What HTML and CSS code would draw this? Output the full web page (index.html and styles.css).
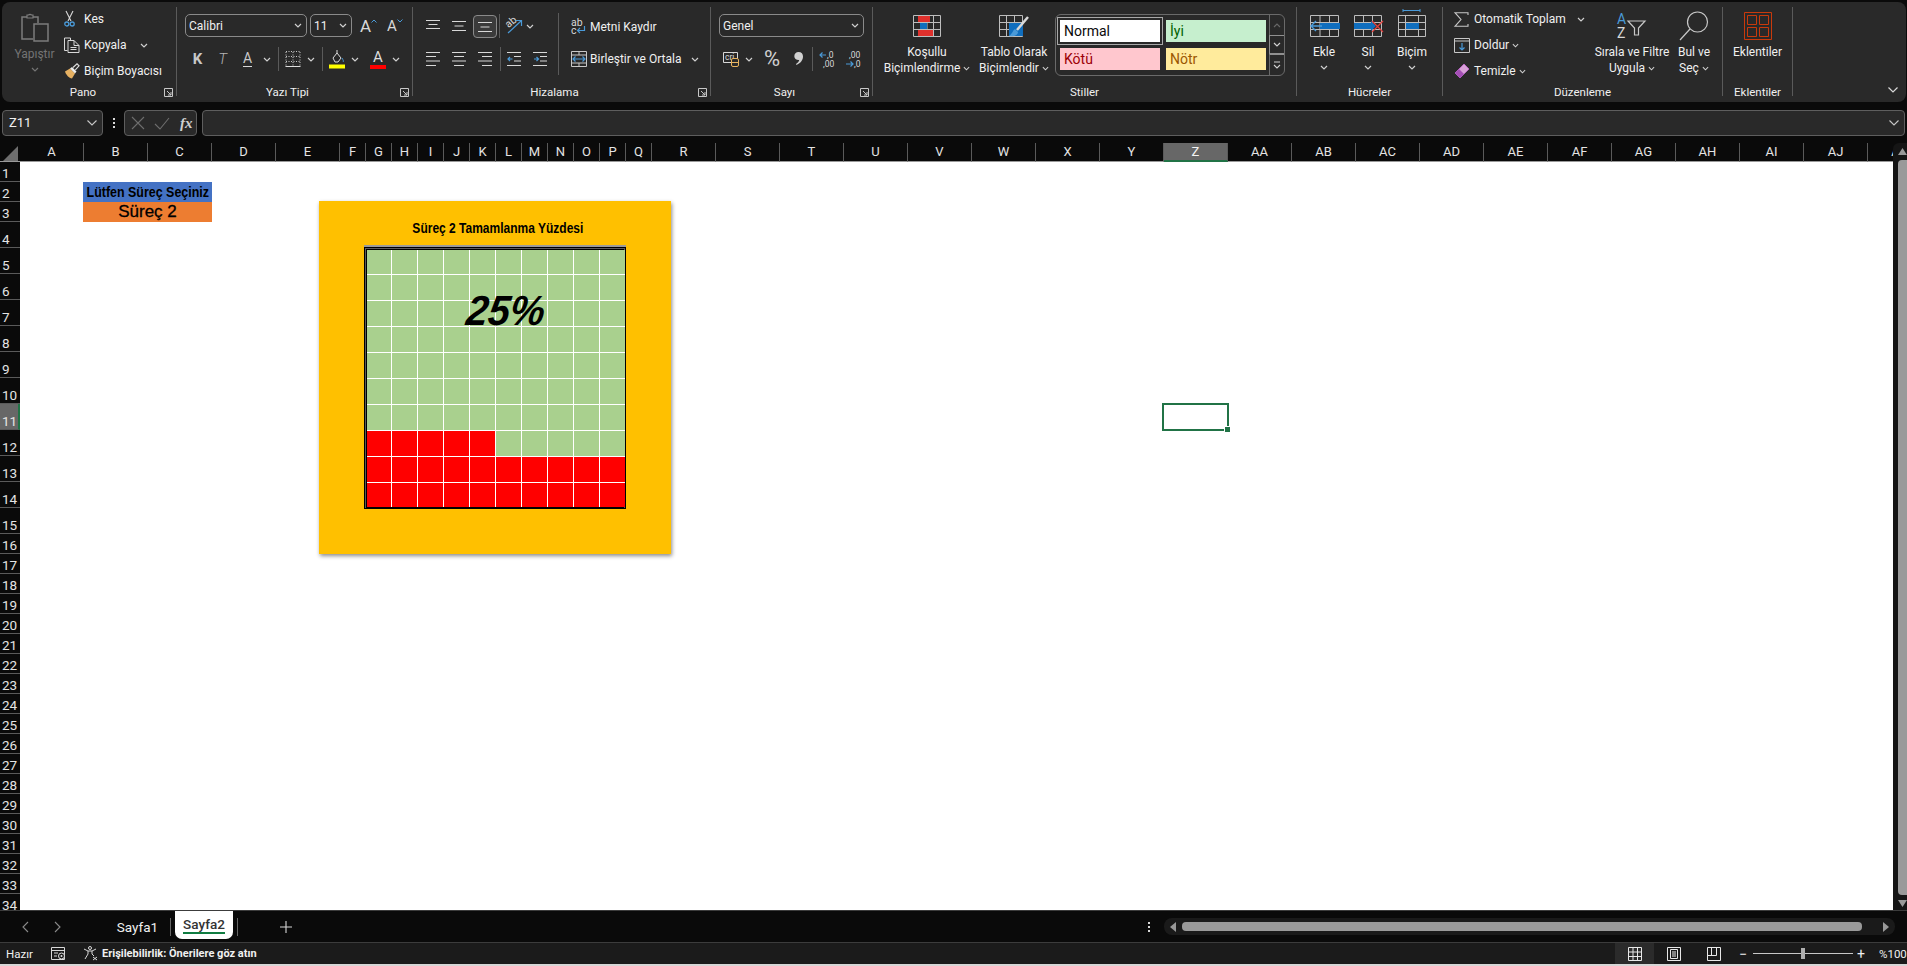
FILE: index.html
```html
<!DOCTYPE html>
<html lang="tr">
<head>
<meta charset="utf-8">
<title>Sayfa2 - Excel</title>
<link rel="stylesheet" href="styles.css">
</head>
<body>
<svg class="sprite" width="0" height="0">
  <symbol id="chev" viewBox="0 0 8 5"><path d="M1 1l3 3 3-3" fill="none" stroke="#d0d0d0" stroke-width="1.2"/></symbol>
  <symbol id="launch" viewBox="0 0 9 9"><path d="M.5 8.5V.5h8v8zM3 3l4 4M7 4v3H4" fill="none" stroke="#c8c8c8"/></symbol>
  <symbol id="grid" viewBox="0 0 28 22"><path d="M.5.5h27v21H.5zM.5 7.5h27M.5 14.5h27M7.5.5v21M14 .5v21M20.5.5v21" fill="none" stroke="#bdbdbd"/></symbol>
</svg>
<div class="app">
  <header class="ribbon">
    <section class="group launcher-group g-clip">
      <div class="body clip-body">
        <div class="paste">
          <svg class="ic-paste" width="28" height="31" viewBox="0 0 28 31"><path d="M12 27H1V5h5M12 5h5v6" fill="none" stroke="#7c7c7c" stroke-width="1.5"/><path d="M6 6V3h1.5a2 2 0 0 1 3 0H12v3z" fill="none" stroke="#7c7c7c" stroke-width="1.2"/><path d="M13 12h14v17H13z" fill="none" stroke="#7c7c7c" stroke-width="1.5"/></svg>
          <span class="dim">Yapıştır</span>
          <svg class="chev dimmed" width="8" height="5"><use href="#chev"/></svg>
        </div>
        <div class="stack">
          <div class="srow"><span class="sic"><svg width="11" height="16" viewBox="0 0 11 16"><path d="M2 0l5 10M9 0L4 10" fill="none" stroke="#d8d8d8" stroke-width="1.1"/><circle cx="2.8" cy="13" r="2" fill="none" stroke="#4a9ad8" stroke-width="1.3"/><circle cx="8.2" cy="13" r="2" fill="none" stroke="#4a9ad8" stroke-width="1.3"/></svg></span>Kes</div>
          <div class="srow"><span class="sic"><svg width="16" height="16" viewBox="0 0 16 16"><path d="M3.5 13.5H.5V1h6v2" fill="none" stroke="#d8d8d8"/><path d="M4 3.500h6l5 5v7H4zM10 3.500v5h5M6.500 10.500h6M6.500 12.500h6" fill="none" stroke="#d8d8d8"/></svg></span>Kopyala<svg class="chev after-copy" width="8" height="5"><use href="#chev"/></svg></div>
          <div class="srow"><span class="sic"><svg width="16" height="16" viewBox="0 0 16 16"><path d="M1 8.500l5-3 5 5-3 5C5 15 2 12 1 8.500z" fill="#e5b061"/><path d="M6 5.500l5 5 1.500-2-4.500-4.500z" fill="#eee"/><path d="M9 4.500L13 .8l2 2-3.700 4" fill="none" stroke="#ddd" stroke-width="1.200"/></svg></span>Biçim Boyacısı</div>
        </div>
      </div>
      <div class="label">Pano</div>
      <svg class="launch" width="9" height="9"><use href="#launch"/></svg>
    </section>

    <section class="group launcher-group g-font">
      <div class="body pad-col">
        <div class="row1 font-row1">
          <div class="combo w122">Calibri<svg class="chev" width="8" height="5"><use href="#chev"/></svg></div>
          <div class="combo w42">11<svg class="chev" width="8" height="5"><use href="#chev"/></svg></div>
          <div class="grow">A<svg class="caret" width="6" height="4" viewBox="0 0 6 4"><path d="M.5 3.500L3 1l2.500 2.500" fill="none" stroke="#4a9ad8"/></svg></div>
          <div class="shrink">A<svg class="caret" width="6" height="4" viewBox="0 0 6 4"><path d="M.5.500L3 3 5.500.5" fill="none" stroke="#4a9ad8"/></svg></div>
        </div>
        <div class="row2 font-row2">
          <b class="glyph">K</b>
          <i class="glyph thin">T</i>
          <span class="glyph under">A</span>
          <svg class="chev" width="8" height="5"><use href="#chev"/></svg>
          <span class="vsep"></span>
          <svg width="16" height="16" viewBox="0 0 16 16"><path d="M1 .5h14M1 5.500h14M1 10.500h14M1 1v14M8 1v14M15 1v14" fill="none" stroke="#c8c8c8" stroke-dasharray="1 1.500"/><path d="M.5 15.500h15" stroke="#e0e0e0"/></svg>
          <svg class="chev" width="8" height="5"><use href="#chev"/></svg>
          <span class="vsep"></span>
          <svg width="16" height="20" viewBox="0 0 16 20"><path d="M4 9l4-5 4 5-3 4H6zM8 4V1" fill="none" stroke="#ddd"/><path d="M13 9c1 2 2 3 1 4" fill="none" stroke="#4a9ad8"/><rect y="15.500" width="16" height="4" fill="#ffff00"/></svg>
          <svg class="chev" width="8" height="5"><use href="#chev"/></svg>
          <span></span>
          <span class="fontcolor">A</span>
          <svg class="chev" width="8" height="5"><use href="#chev"/></svg>
        </div>
      </div>
      <div class="label">Yazı Tipi</div>
      <svg class="launch" width="9" height="9"><use href="#launch"/></svg>
    </section>

    <section class="group launcher-group g-align">
      <div class="body align-body">
        <div class="align-block">
          <div class="row1 align-row1">
            <svg width="14" height="14" viewBox="0 0 14 14"><path d="M0 1.500h14M2.500 5.500h9M0 9.500h14" stroke="#d8d8d8"/></svg>
            <svg width="14" height="14" viewBox="0 0 14 14"><path d="M0 2.500h14M2.500 7h9M0 11.500h14" stroke="#d8d8d8"/></svg>
            <span class="selected"><svg width="14" height="14" viewBox="0 0 14 14"><path d="M0 3.500h14M2.500 8h9M0 12.500h14" stroke="#d8d8d8"/></svg></span>
            <span class="vsep"></span>
            <svg width="17" height="18" viewBox="0 0 17 18"><text x="1" y="9" class="svgt" transform="rotate(-40 5 8)">ab</text><path d="M2 16L15 4M10 3.500h5.500V9" fill="none" stroke="#4a9ad8" stroke-width="1.200"/></svg>
            <svg class="chev" width="8" height="5"><use href="#chev"/></svg>
          </div>
          <div class="row2 align-row2">
            <svg width="14" height="14" viewBox="0 0 14 14"><path d="M0 .5h14M0 4.500h10M0 9h14M0 13.500h10" stroke="#d8d8d8"/></svg>
            <svg width="14" height="14" viewBox="0 0 14 14"><path d="M0 .5h14M2 4.500h10M0 9h14M2 13.500h10" stroke="#d8d8d8"/></svg>
            <svg width="14" height="14" viewBox="0 0 14 14"><path d="M0 .5h14M4 4.500h10M0 9h14M4 13.500h10" stroke="#d8d8d8"/></svg>
            <span class="vsep"></span>
            <svg width="14" height="14" viewBox="0 0 14 14"><path d="M0 .5h14M7 4.500h7M7 9h7M0 13.500h14" stroke="#d8d8d8"/><path d="M5.500 7H1M3 5L1 7l2 2" fill="none" stroke="#4a9ad8" stroke-width="1.200"/></svg>
            <svg width="14" height="14" viewBox="0 0 14 14"><path d="M0 .5h14M7 4.500h7M7 9h7M0 13.500h14" stroke="#d8d8d8"/><path d="M1 7h4.500M3.500 5l2 2-2 2" fill="none" stroke="#4a9ad8" stroke-width="1.200"/></svg>
          </div>
        </div>
        <span class="vsep tall"></span>
        <div class="wrap-block">
          <div class="wrow"><span class="sic2"><svg width="15" height="16" viewBox="0 0 15 16"><text class="svgt"><tspan x="0" y="7">ab</tspan><tspan x="0" y="15">c</tspan></text><path d="M13.500 7v4.500H6.500M9 9l-2.500 2.500L9 14" fill="none" stroke="#4a9ad8" stroke-width="1.200"/></svg></span>Metni Kaydır</div>
          <div class="wrow"><span class="sic2"><svg width="16" height="16" viewBox="0 0 16 16"><path d="M.5.500h15v15H.5zM.5 4h15M.5 12h15M8 .5V4M8 12v3.500" fill="none" stroke="#c8c8c8"/><path d="M2 8h12M4.500 5.500L2 8l2.500 2.500M11.500 5.500L14 8l-2.500 2.500" fill="none" stroke="#4a9ad8" stroke-width="1.200"/></svg></span>Birleştir ve Ortala<svg class="chev push" width="8" height="5"><use href="#chev"/></svg></div>
        </div>
      </div>
      <div class="label">Hizalama</div>
      <svg class="launch" width="9" height="9"><use href="#launch"/></svg>
    </section>

    <section class="group launcher-group g-number">
      <div class="body pad-col">
        <div class="row1"><div class="combo w145">Genel<svg class="chev" width="8" height="5"><use href="#chev"/></svg></div></div>
        <div class="row2 num-row2">
          <svg width="16" height="16" viewBox="0 0 16 16"><path d="M.5 1.500h14v10H.5z" fill="none" stroke="#d8d8d8"/><text x="2" y="9" class="svgs">cri</text><rect x="8.500" y="7.500" width="7" height="8" rx="1.500" fill="#2a2a2a" stroke="#e8b45f"/><path d="M8.500 11.500h7" stroke="#e8b45f"/></svg>
          <svg class="chev" width="8" height="5"><use href="#chev"/></svg>
          <span class="pct-sign">%</span>
          <svg class="comma-ic" width="9" height="13" viewBox="0 0 9 13"><path d="M4.500 0C7.500 0 9 2 9 4.500 9 8.500 6 11.500 2.500 13L2 12c2-1.300 3-2.800 3.200-4C2.500 8.300 .3 6.500.3 4.200.3 1.800 2 0 4.500 0z" fill="#d0d0d0"/></svg>
          <span class="vsep"></span>
          <svg width="16" height="17" viewBox="0 0 16 17"><text class="svgs"><tspan x="8" y="7">,0</tspan><tspan x="4" y="16">,00</tspan></text><path d="M7 4H1M3.500 1.500L1 4l2.500 2.500" fill="none" stroke="#4a9ad8" stroke-width="1.200"/></svg>
          <svg width="16" height="17" viewBox="0 0 16 17"><text class="svgs"><tspan x="4" y="7">,00</tspan><tspan x="9" y="16">,0</tspan></text><path d="M1 13h7M5.500 10.500L8 13l-2.500 2.500" fill="none" stroke="#4a9ad8" stroke-width="1.200"/></svg>
        </div>
      </div>
      <div class="label">Sayı</div>
      <svg class="launch" width="9" height="9"><use href="#launch"/></svg>
    </section>

    <section class="group g-styles">
      <div class="body styles-body">
        <div class="large w88">
          <span class="lic"><svg width="28" height="22" viewBox="0 0 28 22"><use href="#grid" width="28" height="22"/><rect x="5" y="1" width="12" height="6" fill="#e0302c"/><rect x="7" y="8" width="7" height="6" fill="#106ebe"/><rect x="5" y="15" width="15" height="6" fill="#e0302c"/></svg></span>
          <span>Koşullu</span>
          <span>Biçimlendirme<svg class="chev" width="7" height="5"><use href="#chev"/></svg></span>
        </div>
        <div class="large w72">
          <span class="lic"><svg width="30" height="22" viewBox="0 0 30 22"><path d="M.5.500h23v21H.5zM.5 7.500h23M.5 14.500h23M7.500.500v21M15.500 .5v21" fill="none" stroke="#bdbdbd"/><rect x="10" y="8" width="14" height="13" fill="#106ebe"/><path d="M29 2L18 15" stroke="#d8d8d8" stroke-width="2.500"/><path d="M16 14c-2 1-2 4-6 7 5 1 9-1 9-4z" fill="#4a9ad8"/></svg></span>
          <span>Tablo Olarak</span>
          <span>Biçimlendir<svg class="chev" width="7" height="5"><use href="#chev"/></svg></span>
        </div>
        <div class="gallery">
          <div class="styles-grid">
            <div class="sty s-normal">Normal</div>
            <div class="sty s-good">İyi</div>
            <div class="sty s-bad">Kötü</div>
            <div class="sty s-neutral">Nötr</div>
          </div>
          <div class="gal-scroll">
            <span class="gs gs1"><svg width="8" height="5" viewBox="0 0 8 5"><path d="M1 4l3-3 3 3" fill="none" stroke="#666" stroke-width="1.200"/></svg></span>
            <span class="gs gs2"><svg class="chev" width="8" height="5"><use href="#chev"/></svg></span>
            <span class="gs gs3"><svg width="8" height="8" viewBox="0 0 8 8"><path d="M1 1h6M1 4l3 3 3-3" fill="none" stroke="#d0d0d0" stroke-width="1.100"/></svg></span>
          </div>
        </div>
      </div>
      <div class="label">Stiller</div>
    </section>

    <section class="group g-cells">
      <div class="body cells-body">
        <div class="large w44">
          <span class="lic"><svg width="31" height="22" viewBox="0 0 31 22"><path d="M1.500.500h28v21h-28zM1.500 7.500h28M1.500 14.500h28M11 .5v21M20.500 .5v21" fill="none" stroke="#bdbdbd"/><rect x="11" y="8" width="20" height="6" fill="#106ebe"/><path d="M13 11H2M7 6l-5 5 5 5" fill="none" stroke="#4a9ad8" stroke-width="1.400"/></svg></span>
          <span>Ekle</span>
          <svg class="chev big" width="8" height="5"><use href="#chev"/></svg>
        </div>
        <div class="large w44">
          <span class="lic"><svg width="31" height="22" viewBox="0 0 31 22"><path d="M1.500.500h27v21h-27zM1.500 7.500h27M1.500 14.500h27M10.500.5v21M19.500 .5v21" fill="none" stroke="#bdbdbd"/><rect x="1" y="8" width="17" height="6" fill="#106ebe"/><path d="M18 6l5 5-5 5z" fill="#106ebe"/><path d="M19 6l11 11M30 6L19 17" stroke="#e0413e" stroke-width="1.300"/></svg></span>
          <span>Sil</span>
          <svg class="chev big" width="8" height="5"><use href="#chev"/></svg>
        </div>
        <div class="large w44 tall-ic">
          <span class="lic"><svg width="28" height="28" viewBox="0 0 28 28"><path d="M5 1.500h17M5 0v3M22 0v3" stroke="#4a9ad8"/><path d="M.5 6.500h27v21H.5zM.5 13.500h27M.5 20.500h27M7.500 6.500v21M20.500 6.500v21" fill="none" stroke="#bdbdbd"/><rect x="8" y="14" width="13" height="6" fill="#106ebe"/></svg></span>
          <span>Biçim</span>
          <svg class="chev big" width="8" height="5"><use href="#chev"/></svg>
        </div>
      </div>
      <div class="label">Hücreler</div>
    </section>

    <section class="group g-edit">
      <div class="body edit-body">
        <div class="stack wide">
          <div class="srow"><span class="sic"><svg width="15" height="15" viewBox="0 0 15 15"><path d="M14 3V.7H1l6 6.800L1 14.300h13V12" fill="none" stroke="#c8c8c8" stroke-width="1.100"/></svg></span>Otomatik Toplam<svg class="chev after-sum" width="8" height="5"><use href="#chev"/></svg></div>
          <div class="srow"><span class="sic"><svg width="16" height="15" viewBox="0 0 16 15"><path d="M.5.500h15v14H.5zM.5 3h15" fill="none" stroke="#c8c8c8"/><path d="M8 5v7M5.500 9.500L8 12l2.500-2.500" fill="none" stroke="#4a9ad8" stroke-width="1.200"/></svg></span>Doldur<svg class="chev after" width="7" height="5"><use href="#chev"/></svg></div>
          <div class="srow"><span class="sic"><svg width="16" height="16" viewBox="0 0 16 16"><path d="M1 10l9-9 5 5-9 9z" fill="#d8a0d8" stroke="#b565c0"/><path d="M1 10l4-4 5 5-4 4z" fill="#a44fb5"/></svg></span>Temizle<svg class="chev after" width="7" height="5"><use href="#chev"/></svg></div>
        </div>
        <div class="large w76">
          <span class="lic"><svg width="30" height="27" viewBox="0 0 30 27"><text class="svga"><tspan x="0" y="12" class="blue">A</tspan><tspan x="0" y="26">Z</tspan></text><path d="M11 9h17l-6.500 7v7h-4v-7z" fill="none" stroke="#c8c8c8" stroke-width="1.200"/></svg></span>
          <span>Sırala ve Filtre</span>
          <span>Uygula<svg class="chev" width="7" height="5"><use href="#chev"/></svg></span>
        </div>
        <div class="large w40 ml4">
          <span class="lic"><svg width="30" height="30" viewBox="0 0 30 30"><circle cx="18.500" cy="11" r="10" fill="none" stroke="#c8c8c8" stroke-width="1.200"/><path d="M11 18L1 29" stroke="#c8c8c8" stroke-width="1.200"/></svg></span>
          <span>Bul ve</span>
          <span>Seç<svg class="chev" width="7" height="5"><use href="#chev"/></svg></span>
        </div>
      </div>
      <div class="label">Düzenleme</div>
    </section>

    <section class="group g-addins">
      <div class="body addins-body">
        <div class="large w70">
          <span class="lic"><svg width="28" height="28" viewBox="0 0 28 28"><path d="M.5.500h27v27H.5z" fill="none" stroke="#c93a0c"/><path d="M3.500 3.500h9v9h-9zM15.500 3.500h9v9h-9zM3.500 15.500h9v9h-9zM15.500 15.500h9v9h-9z" fill="none" stroke="#c93a0c"/></svg></span>
          <span>Eklentiler</span>
        </div>
      </div>
      <div class="label">Eklentiler</div>
    </section>

    <svg class="collapse" width="10" height="6" viewBox="0 0 10 6"><path d="M.5.500L5 5 9.500.5" fill="none" stroke="#d8d8d8" stroke-width="1.200"/></svg>
  </header>

  <div class="formula">
    <div class="namebox">Z11<svg width="10" height="6" viewBox="0 0 10 6"><path d="M.5.500L5 5 9.500.5" fill="none" stroke="#c8c8c8" stroke-width="1.100"/></svg></div>
    <div class="fdots"><span></span><span></span><span></span></div>
    <div class="fxbox">
      <svg width="14" height="14" viewBox="0 0 14 14"><path d="M1 1l12 12M13 1L1 13" stroke="#6e6e6e" stroke-width="1.100"/></svg>
      <svg width="16" height="13" viewBox="0 0 16 13"><path d="M1 7l5 5L15 1" fill="none" stroke="#6e6e6e" stroke-width="1.100"/></svg>
      <i class="fx">fx</i>
    </div>
    <div class="finput"><svg width="10" height="6" viewBox="0 0 10 6"><path d="M.5.500L5 5 9.500.5" fill="none" stroke="#c8c8c8" stroke-width="1.100"/></svg></div>
  </div>

  <main class="sheetwrap">
    <div class="sheet">
      <div class="corner"><svg width="15" height="15" viewBox="0 0 15 15"><path d="M15 0v15H0z" fill="#6e6e6e"/></svg></div>
      <div class="ch">A</div><div class="ch">B</div><div class="ch">C</div><div class="ch">D</div><div class="ch">E</div><div class="ch">F</div><div class="ch">G</div><div class="ch">H</div><div class="ch">I</div><div class="ch">J</div><div class="ch">K</div><div class="ch">L</div><div class="ch">M</div><div class="ch">N</div><div class="ch">O</div><div class="ch">P</div><div class="ch">Q</div><div class="ch">R</div><div class="ch">S</div><div class="ch">T</div><div class="ch">U</div><div class="ch">V</div><div class="ch">W</div><div class="ch">X</div><div class="ch">Y</div><div class="ch active-col">Z</div><div class="ch">AA</div><div class="ch">AB</div><div class="ch">AC</div><div class="ch">AD</div><div class="ch">AE</div><div class="ch">AF</div><div class="ch">AG</div><div class="ch">AH</div><div class="ch">AI</div><div class="ch">AJ</div><div class="ch">AK</div>
      <div class="rh">1</div><div class="rh">2</div><div class="rh">3</div><div class="rh">4</div><div class="rh">5</div><div class="rh">6</div><div class="rh">7</div><div class="rh">8</div><div class="rh">9</div><div class="rh">10</div><div class="rh active-row">11</div><div class="rh">12</div><div class="rh">13</div><div class="rh">14</div><div class="rh">15</div><div class="rh">16</div><div class="rh">17</div><div class="rh">18</div><div class="rh">19</div><div class="rh">20</div><div class="rh">21</div><div class="rh">22</div><div class="rh">23</div><div class="rh">24</div><div class="rh">25</div><div class="rh">26</div><div class="rh">27</div><div class="rh">28</div><div class="rh">29</div><div class="rh">30</div><div class="rh">31</div><div class="rh">32</div><div class="rh">33</div><div class="rh">34</div>

      <div class="cell-title"><span class="squeeze">Lütfen Süreç Seçiniz</span></div>
      <div class="cell-choice">Süreç 2</div>
      <div class="selection"><span class="handle"></span></div>

      <div class="panel">
        <div class="panel-title"><span class="squeeze s80">Süreç 2 Tamamlanma Yüzdesi</span></div>
        <div class="chart">
          <div class="waffle">
            <div class="c"></div><div class="c"></div><div class="c"></div><div class="c"></div><div class="c"></div><div class="c"></div><div class="c"></div><div class="c"></div><div class="c"></div><div class="c"></div>
            <div class="c"></div><div class="c"></div><div class="c"></div><div class="c"></div><div class="c"></div><div class="c"></div><div class="c"></div><div class="c"></div><div class="c"></div><div class="c"></div>
            <div class="c"></div><div class="c"></div><div class="c"></div><div class="c"></div><div class="c"></div><div class="c"></div><div class="c"></div><div class="c"></div><div class="c"></div><div class="c"></div>
            <div class="c"></div><div class="c"></div><div class="c"></div><div class="c"></div><div class="c"></div><div class="c"></div><div class="c"></div><div class="c"></div><div class="c"></div><div class="c"></div>
            <div class="c"></div><div class="c"></div><div class="c"></div><div class="c"></div><div class="c"></div><div class="c"></div><div class="c"></div><div class="c"></div><div class="c"></div><div class="c"></div>
            <div class="c"></div><div class="c"></div><div class="c"></div><div class="c"></div><div class="c"></div><div class="c"></div><div class="c"></div><div class="c"></div><div class="c"></div><div class="c"></div>
            <div class="c"></div><div class="c"></div><div class="c"></div><div class="c"></div><div class="c"></div><div class="c"></div><div class="c"></div><div class="c"></div><div class="c"></div><div class="c"></div>
            <div class="c on"></div><div class="c on"></div><div class="c on"></div><div class="c on"></div><div class="c on"></div><div class="c"></div><div class="c"></div><div class="c"></div><div class="c"></div><div class="c"></div>
            <div class="c on"></div><div class="c on"></div><div class="c on"></div><div class="c on"></div><div class="c on"></div><div class="c on"></div><div class="c on"></div><div class="c on"></div><div class="c on"></div><div class="c on"></div>
            <div class="c on"></div><div class="c on"></div><div class="c on"></div><div class="c on"></div><div class="c on"></div><div class="c on"></div><div class="c on"></div><div class="c on"></div><div class="c on"></div><div class="c on"></div>
          </div>
          <div class="pct">25%</div>
        </div>
      </div>
    </div>
    <div class="vscroll">
      <svg width="9" height="7" viewBox="0 0 9 7"><path d="M4.500 0L9 7H0z" fill="#999"/></svg>
      <div class="vthumb"></div>
      <svg width="9" height="7" viewBox="0 0 9 7"><path d="M4.500 7L9 0H0z" fill="#999"/></svg>
    </div>
  </main>

  <div class="tabs">
    <svg class="navbtn" width="7" height="12" viewBox="0 0 7 12"><path d="M6 1L1 6l5 5" fill="none" stroke="#8a8a8a" stroke-width="1.100"/></svg>
    <svg class="navbtn next" width="7" height="12" viewBox="0 0 7 12"><path d="M1 1l5 5-5 5" fill="none" stroke="#8a8a8a" stroke-width="1.100"/></svg>
    <div class="tab">Sayfa1</div>
    <span class="tsep"></span>
    <div class="tab active"><span>Sayfa2</span></div>
    <span class="tsep"></span>
    <svg class="addtab" width="12" height="12" viewBox="0 0 12 12"><path d="M6 0v12M0 6h12" stroke="#d8d8d8" stroke-width="1.100"/></svg>
    <div class="hdots"><span></span><span></span><span></span></div>
    <div class="htrack">
      <svg width="6" height="10" viewBox="0 0 6 10"><path d="M0 5l6-5v10z" fill="#999"/></svg>
      <div class="hthumb"></div>
      <svg width="6" height="10" viewBox="0 0 6 10"><path d="M6 5L0 0v10z" fill="#999"/></svg>
    </div>
  </div>

  <footer class="status">
    <span class="ready">Hazır</span>
    <svg class="macro" width="15" height="15" viewBox="0 0 15 15"><path d="M.5 1.500h13v12H.5zM.5 4.500h13M3 7h4M3 10h3" fill="none" stroke="#d8d8d8"/><circle cx="10.500" cy="10" r="3" fill="#1b1b1b" stroke="#e0e0e0"/><circle cx="10.500" cy="10" r="1" fill="#e0e0e0"/></svg>
    <svg class="access" width="15" height="15" viewBox="0 0 15 15"><circle cx="7" cy="2" r="1.500" fill="none" stroke="#d8d8d8"/><path d="M1 3l4 2h4l4-2M5 5v3L2 13M9 5v3l2 2M10 11l4 3M14 11l-4 3" fill="none" stroke="#d8d8d8"/></svg>
    <b class="a11y">Erişilebilirlik: Önerilere göz atın</b>
    <div class="views">
      <div class="view v1"><svg width="14" height="14" viewBox="0 0 14 14"><path d="M.5.500h13v13H.5zM.5 5h13M.5 9.500h13M5 .5v13M9.500.5v13" fill="none" stroke="#e8e8e8"/></svg></div>
      <div class="view v2"><svg width="14" height="14" viewBox="0 0 14 14"><path d="M.5.500h13v13H.5z" fill="none" stroke="#e8e8e8"/><path d="M3.500 2.500h7v9h-7zM5 5h4M5 7h4M5 9h4" fill="none" stroke="#e8e8e8"/></svg></div>
      <div class="view v3"><svg width="14" height="14" viewBox="0 0 14 14"><path d="M.5.500h13v13H.5zM.5 8.500h9M4.500.5v8M9.500.5v8" fill="none" stroke="#e8e8e8"/></svg></div>
    </div>
    <div class="zoom">
      <span class="zbtn">−</span>
      <div class="zslider"><span class="zknob"></span></div>
      <span class="zbtn">+</span>
      <span class="zval">%100</span>
    </div>
  </footer>
  <div class="edge"></div>
</div>
</body>
</html>
```

FILE: styles.css
```css
* { box-sizing: border-box; }
html, body { margin: 0; padding: 0; }
body {
  width: 1907px;
  height: 966px;
  overflow: hidden;
  background: #0a0a0a;
  color: #f0f0f0;
  font: 12px/16px Roboto, "Liberation Sans", sans-serif;
}
.sprite { position: absolute; }
svg { display: block; flex: none; overflow: visible; }
.app { display: flex; flex-direction: column; height: 966px; }

/* Ribbon */
.ribbon {
  position: relative;
  display: flex;
  width: 1904px;
  height: 100px;
  margin: 2px 0 0 2px;
  background: #292929;
  border-radius: 8px;
}
.group {
  position: relative;
  display: flex;
  flex-direction: column;
  flex: none;
  height: 89px;
  margin-top: 5px;
  border-right: 1px solid #5a5a5a;
}
.g-clip { width: 175px; }
.g-font { width: 236px; }
.g-align { width: 298px; }
.g-number { width: 162px; }
.g-styles { width: 424px; }
.g-cells { width: 146px; }
.g-edit { width: 280px; }
.g-addins { width: 70px; }
.body { flex: 1; display: flex; min-height: 0; }
.label {
  height: 16px;
  margin-bottom: -4px;
  text-align: center;
  font-size: 11.5px;
}
.launcher-group .label { padding-right: 14px; }
.g-clip.launcher-group .label { padding-right: 12px; }
.launch { position: absolute; right: 3px; bottom: -1px; }
.chev { width: 8px; height: 5px; }
.dimmed { opacity: .45; }
.vsep { display: block; width: 1px; height: 24px; background: #5a5a5a; }

/* Clipboard */
.clip-body { padding-left: 3px; }
.paste {
  width: 59px;
  display: flex;
  flex-direction: column;
  align-items: center;
  padding-top: 5px;
}
.ic-paste { margin-bottom: 3px; }
.dim { color: #747474; margin-bottom: 5px; }
.stack { margin-top: -1px; width: 110px; }
.stack.wide { width: 140px; }
.srow { height: 26px; display: flex; align-items: center; white-space: nowrap; }
.sic { width: 20px; display: flex; }
.after-copy { margin-left: 14px; }
.after-sum { margin-left: 11px; }
.after { margin-left: 3px; width: 7px; }

/* Row helpers */
.pad-col { flex-direction: column; padding: 7px 0 0 8px; }
.row1 { height: 23px; display: flex; align-items: center; }
.row2 { height: 22px; margin-top: 10px; display: grid; align-items: center; justify-items: center; }
.combo {
  height: 23px;
  display: flex;
  align-items: center;
  justify-content: space-between;
  padding: 0 4px 0 3px;
  border: 1px solid #8a8a8a;
  border-radius: 5px;
  font-size: 12px;
}
.w122 { width: 122px; }
.w42 { width: 42px; margin-left: 3px; }
.w145 { width: 145px; }
.grow, .shrink { display: flex; font-size: 17px; color: #d8d8d8; }
.grow { margin-left: 8px; width: 24px; }
.shrink { margin-left: 3px; font-size: 15px; }
.caret { margin-top: 1px; }
.font-row2 { grid-template-columns: 25px 25px 25px 14px 9px 20px 16px 6px 24px 12px 5px 24px 12px; }
.glyph { font-size: 15px; color: #c8c8c8; }
.thin { font-weight: 300; color: #b4b4b4; }
.under { border-bottom: 1px solid #d8d8d8; line-height: 15px; font-size: 14px; }
.fontcolor { font-size: 15px; line-height: 15px; color: #ddd; border-bottom: 4px solid #ff0000; width: 16px; text-align: center; }

/* Alignment */
.align-body { padding-left: 7px; }
.align-block { width: 138px; padding-top: 7px; }
.align-row1 { display: grid; grid-template-columns: 26px 26px 25px 5px 24px 8px; justify-items: center; }
.align-row2 { grid-template-columns: 26px 26px 26px 4px 24px 28px; }
.selected {
  width: 24px;
  height: 23px;
  display: flex;
  align-items: center;
  justify-content: center;
  background: #3b3b3b;
  border: 1px solid #8a8a8a;
  border-radius: 4px;
}
.svgt { font: 10.5px Roboto, sans-serif; fill: #d8d8d8; }
.svgs { font: 8.5px Roboto, sans-serif; fill: #d8d8d8; }
.svga { font: 14px Roboto, sans-serif; fill: #d8d8d8; }
.svga .blue { fill: #4a9ad8; }
.tall { height: 62px; margin-top: 6px; }
.wrap-block { width: 130px; margin-left: 12px; padding-top: 7px; }
.wrow { height: 26px; margin-bottom: 6px; display: flex; align-items: center; white-space: nowrap; }
.sic2 { width: 19px; display: flex; }
.push { margin-left: auto; margin-right: 2px; }

/* Number */
.num-row2 { grid-template-columns: 24px 12px 34px 18px 10px 20px 32px; }
.pct-sign { font-size: 22px; line-height: 22px; color: #d0d0d0; }
.comma-ic { margin-bottom: 2px; }

/* Styles */
.styles-body { padding-left: 10px; }
.large {
  display: flex;
  flex-direction: column;
  align-items: center;
  white-space: nowrap;
  flex: none;
}
.large > span { display: flex; align-items: center; gap: 3px; height: 16px; }
.large > span.lic { height: 37px; }
.large .chev { width: 7px; }
.large .chev.big { width: 8px; margin-top: 5px; }
.w88 { width: 88px; }
.w72 { width: 72px; margin-left: 7px; }
.w44 { width: 44px; }
.w76 { width: 76px; }
.w40 { width: 40px; }
.ml4 { margin-left: 4px; }
.w70 { width: 69px; }
.gallery {
  display: flex;
  width: 230px;
  height: 62px;
  margin: 7px 0 0 5px;
  border: 1px solid #6a6a6a;
  border-radius: 6px;
  overflow: hidden;
}
.styles-grid {
  display: grid;
  grid-template-columns: 100px 100px;
  grid-auto-rows: 22px;
  gap: 6px;
  padding: 5px 0 0 4px;
  width: 213px;
}
.sty {
  padding-left: 4px;
  line-height: 22px;
  font-size: 14px;
}
.s-normal { background: #fff; color: #0a0a0a; outline: 1px solid #a8a8a8; outline-offset: 2px; }
.s-good { background: #c6efce; color: #006100; }
.s-bad { background: #ffc7ce; color: #9c0006; }
.s-neutral { background: #ffeb9c; color: #9c5700; }
.gal-scroll { flex: 1; display: flex; flex-direction: column; }
.gs { display: flex; align-items: center; justify-content: center; border-left: 1px solid #6a6a6a; }
.gs1 { height: 20px; }
.gs2 { height: 19px; border: 1px solid #909090; border-right: 0; }
.gs3 { flex: 1; border-top: 1px solid #909090; }

/* Cells / editing */
.cells-body { padding-left: 5px; }
.large > span.lic { padding-top: 0; }
.tall-ic > span.lic { padding-bottom: 5px; }
.edit-body { padding-left: 11px; }

/* Collapse chevron */
.collapse { position: absolute; right: 8px; top: 85px; }

/* Formula bar */
.formula { display: flex; height: 26px; margin: 8px 2px 0 2px; }
.namebox, .fxbox, .finput {
  background: #292929;
  border: 1px solid #5e5e5e;
  border-radius: 4px;
  display: flex;
  align-items: center;
}
.namebox {
  width: 101px;
  justify-content: space-between;
  padding: 0 5px 0 6px;
  font-size: 13px;
}
.fdots { width: 21px; display: flex; flex-direction: column; align-items: center; justify-content: center; gap: 2px; }
.fdots span, .hdots span { width: 2px; height: 2px; background: #d8d8d8; }
.fxbox { width: 73px; padding-left: 6px; gap: 9px; }
.fx { font: italic bold 15px "Liberation Serif", serif; color: #d0d0d0; margin-left: 1px; }
.finput { flex: 1; margin-left: 5px; justify-content: flex-end; padding-right: 5px; }

/* Sheet */
.sheetwrap { display: flex; height: 767px; margin-top: 7px; }
.sheet {
  position: relative;
  width: 1893px;
  height: 767px;
  overflow: hidden;
  display: grid;
  grid-template-columns: 20px repeat(5, 64px) repeat(12, 26px) repeat(20, 64px);
  grid-template-rows: 19px repeat(3, 20px) repeat(12, 26px) repeat(19, 20px);
  background: #fff;
}
.corner {
  grid-area: 1 / 1;
  background: #0a0a0a;
  padding: 3px 0 0 3px;
  border-bottom: 1px solid #9a9a9a;
}
.ch {
  grid-row: 1;
  background: #0a0a0a;
  border-right: 1px solid #5a5a5a;
  border-bottom: 1px solid #9a9a9a;
  text-align: center;
  font-size: 13px;
  line-height: 18px;
  color: #e4e4e4;
}
.active-col { background: #676767; border-bottom: 2px solid #217346; color: #f4f4f4; }
.rh {
  grid-column: 1;
  display: flex;
  align-items: flex-end;
  padding: 0 0 0 2px;
  background: #0a0a0a;
  border-bottom: 1px solid #5a5a5a;
  font-size: 13.5px;
  line-height: 15px;
  color: #e4e4e4;
}
.active-row { background: #676767; border-right: 2px solid #217346; }
.cell-title, .cell-choice {
  display: flex;
  justify-content: center;
  margin-left: -1px;
  color: #000;
  font-family: "Liberation Sans", sans-serif;
  white-space: nowrap;
}
.cell-title {
  grid-area: 3 / 3 / 4 / 5;
  background: #4472c4;
  font-size: 15px;
  font-weight: 700;
  line-height: 20px;
}
.cell-choice {
  grid-area: 4 / 3 / 5 / 5;
  background: #ed7d31;
  font-size: 17px;
  line-height: 20px;
  -webkit-text-stroke: .3px #000;
}
.squeeze { display: inline-block; flex: none; transform: scaleX(.83); }
.squeeze.s80 { transform: scaleX(.8); }
.selection {
  grid-area: 12 / 27;
  position: relative;
  margin: -1px -1px -1px -2px;
  border: 2px solid #217346;
}
.handle {
  position: absolute;
  right: -3px;
  bottom: -3px;
  width: 6px;
  height: 6px;
  background: #217346;
  border: 1px solid #fff;
  border-width: 1px 0 0 1px;
}

/* Floating chart panel */
.panel {
  position: absolute;
  left: 319px;
  top: 58px;
  width: 352px;
  height: 353px;
  padding: 18px 0 0 45px;
  background: #ffc000;
  box-shadow: 1px 2px 4px rgba(0, 0, 0, .45);
}
.panel-title {
  display: flex;
  justify-content: center;
  width: 262px;
  height: 26px;
  padding-left: 6px;
  color: #000;
  font: 700 15px/18px "Liberation Sans", sans-serif;
  white-space: nowrap;
}
.chart {
  position: relative;
  width: 262px;
  padding: 1px 1px 0;
  border: 1px solid #000;
  box-shadow: 0 -2px 0 #9a9a9a;
  margin-top: 2px;
  background: #5a5a5a;
}
.waffle {
  display: grid;
  grid-template-columns: 25px repeat(8, 26px) 25px;
  grid-template-rows: 25px repeat(8, 26px) 24px;
  border: 1px solid #000;
}
.c {
  background: #a9d08e;
  border-right: 1px solid #fff;
  border-bottom: 1px solid #fff;
}
.c:nth-child(10n) { border-right: 0; }
.c:nth-child(n+91) { border-bottom: 0; }
.c.on { background: #ff0000; }
.pct {
  position: absolute;
  left: 99px;
  top: 40px;
  color: #000;
  font: italic 700 42px/46px "Liberation Sans", sans-serif;
  white-space: nowrap;
  transform: scaleX(.93) skewX(-8deg);
}

/* Vertical scrollbar */
.vscroll {
  width: 14px;
  height: 767px;
  display: flex;
  flex-direction: column;
  align-items: flex-end;
  padding: 5px 0 3px 0;
  background: #151515;
  border-radius: 6px 0 0 0;
}
.vthumb { width: 9px; flex: 1; margin: 5px 0; background: #9a9a9a; border-radius: 4px 0 0 4px; }

/* Tabs */
.tabs {
  display: flex;
  align-items: center;
  height: 32px;
  padding: 0 12px 0 22px;
  background: #0a0a0a;
  border-top: 1px solid #3c3c3c;
}
.navbtn.next { margin-left: 25px; }
.tab {
  width: 65px;
  margin-left: 44px;
  text-align: center;
  font-size: 13.5px;
}
.tab.active {
  align-self: flex-start;
  width: 58px;
  height: 28px;
  margin-left: 4px;
  padding-top: 5px;
  background: #fff;
  color: #333;
  border-radius: 0 0 7px 7px;
}
.tab.active span {
  display: inline-block;
  height: 18px;
  border-bottom: 2px solid #107c41;
  font-weight: 500;
}
.tsep { width: 1px; height: 18px; background: #666; }
.tab.active + .tsep { margin-left: 4px; }
.addtab { margin-left: 42px; }
.hdots { margin-left: auto; display: flex; flex-direction: column; gap: 2px; margin-right: 14px; }
.htrack {
  width: 731px;
  height: 17px;
  display: flex;
  align-items: center;
  padding: 0 6px;
  gap: 6px;
  background: #1a1a1a;
  border-radius: 8px;
}
.hthumb { flex: 1; height: 9px; margin-right: 15px; background: #9a9a9a; border-radius: 4px; }

/* Status bar */
.status {
  display: flex;
  align-items: center;
  height: 22px;
  padding-left: 6px;
  background: #1b1b1b;
  border-top: 1px solid #3c3c3c;
  font-size: 11.5px;
}
.ready { width: 45px; }
.macro { margin-right: 17px; }
.access { margin-right: 4px; }
.a11y { font-size: 11px; font-weight: 700; }
.views { margin-left: auto; display: flex; height: 21px; }
.view { display: flex; align-items: center; justify-content: center; }
.v1 { width: 39px; background: #2b2b2b; }
.v2 { width: 39px; }
.v3 { width: 42px; }
.zoom { display: flex; align-items: center; width: 172px; padding-left: 3px; }
.zbtn { width: 10px; text-align: center; font-size: 14px; line-height: 16px; }
.zslider {
  position: relative;
  width: 100px;
  height: 1px;
  margin: 0 3px 0 5px;
  background: #c8c8c8;
}
.zknob {
  position: absolute;
  left: 48px;
  top: -5px;
  width: 4px;
  height: 11px;
  background: #b0b0b0;
}
.zval { margin-left: 13px; font-size: 11.5px; }
.edge { height: 2px; background: #d6d6d6; }
```
